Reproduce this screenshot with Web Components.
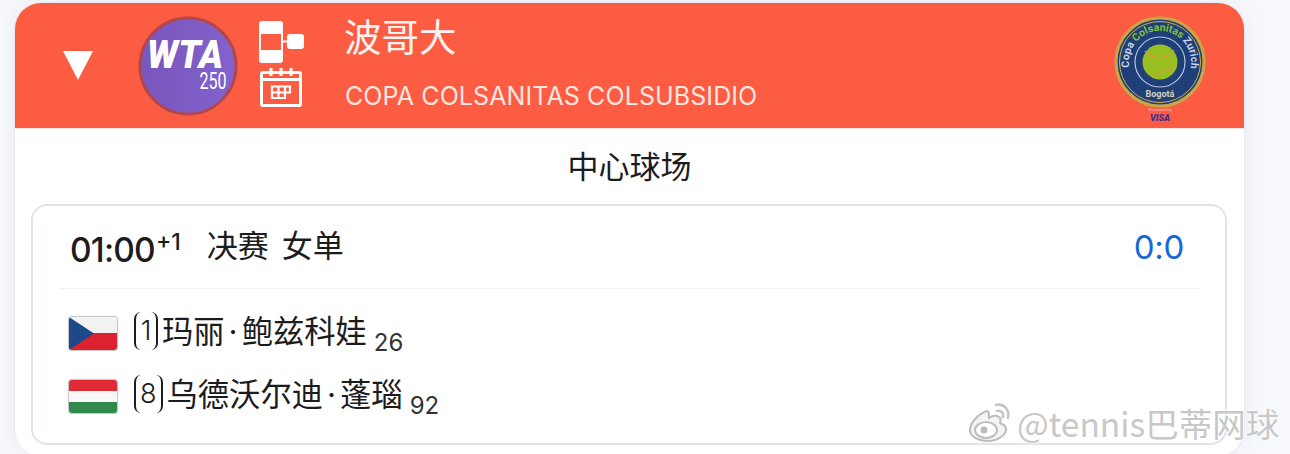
<!DOCTYPE html>
<html>
<head>
<meta charset="utf-8">
<style>
html, body { margin: 0; padding: 0; height: 454px; overflow: hidden; background: #f8f9fc; }
body { font-family: "Inter", "Noto Sans CJK SC", sans-serif; }
</style>
</head>
<body>
<tournament-page>
  <tournament-header slot="header" title-text="波哥大" subtitle="COPA COLSANITAS COLSUBSIDIO"></tournament-header>
  <match-card time="01:00" plus="+1" round="决赛 女单" score="0:0">
    <player-row flag="cz" seed="1" name="玛丽·鲍兹科娃" rank="26"></player-row>
    <player-row flag="hu" seed="8" name="乌德沃尔迪·蓬瑙" rank="92"></player-row>
  </match-card>
</tournament-page>
<weibo-mark></weibo-mark>

<script>
const pageTemplate = document.createElement('template');
pageTemplate.innerHTML = `
<style>
:host { display: block; padding: 3px 46px 0 15px; }
#card {
  background: #fff;
  border-radius: 26px;
  height: 453px;
  box-shadow: 0 0 0 1px #e6e9f2, 0 0 24px rgba(190,196,220,.25);
  overflow: hidden;
}
#court {
  height: 76px;
  box-sizing: border-box;
  padding-bottom: 4px;
  display: flex;
  align-items: center;
  justify-content: center;
  font: 400 31px "Noto Sans CJK SC", sans-serif;
  color: #1c1c1e;
}
#content { padding: 0 17px 0 16px; }
</style>
<div id="card">
  <slot name="header"></slot>
  <div id="court">中心球场</div>
  <div id="content"><slot></slot></div>
</div>
`;

class TournamentPage extends HTMLElement {
  connectedCallback() {
    this.attachShadow({ mode: 'open' });
    this.shadowRoot.appendChild(pageTemplate.content.cloneNode(true));
  }
}

const headerTemplate = document.createElement('template');
headerTemplate.innerHTML = `
<style>
:host { display: block; }
#bar {
  height: 125px;
  background: #fc5c41;
  display: flex;
  align-items: center;
  color: #fff;
  box-shadow: 0 1px 1px #f1e4e2;
  position: relative;
}
#arrow { width: 32px; height: 32px; margin: -2px 0 0 47px; flex: none; }
#wta { width: 102px; height: 102px; margin: 0 0 0 43px; flex: none; }
#icons { display: flex; flex-direction: column; gap: 3px; margin: -2px 0 0 19px; width: 48px; flex: none; }
#icons svg { display: block; }
#titles { margin-left: 39px; flex: 1; display: flex; flex-direction: column; height: 125px; }
#title { font: 400 37.5px/40px "Noto Sans CJK SC", sans-serif; margin: 12px 0 0 -1px; color: #fff2ee; }
#sub { font: 400 25px/30px "Inter", sans-serif; margin-top: 26px; color: #ffe6e0; letter-spacing: .1px; white-space: nowrap; }
#logo { width: 96px; height: 112px; margin: 6px 36px 0 0; flex: none; }
</style>
<div id="bar">
  <svg id="arrow" viewBox="0 0 32 32"><path d="M1 2 H31 L16 31 Z" fill="#fff"/></svg>
  <svg id="wta" viewBox="0 0 102 102">
    <defs><linearGradient id="g" x1="0" x2="1" y1="0" y2="0"><stop offset="0" stop-color="#7a56bd"/><stop offset="1" stop-color="#8262cc"/></linearGradient></defs>
    <circle cx="51" cy="51" r="48" fill="url(#g)" stroke="#b3464b" stroke-width="3"/>
    <text x="48" y="53" text-anchor="middle" font-family="Roboto" font-weight="900" font-style="italic" font-size="39" textLength="76" lengthAdjust="spacingAndGlyphs" fill="#fff">WTA</text>
    <text x="76" y="74" text-anchor="middle" font-family="Roboto" font-size="23" textLength="27" lengthAdjust="spacingAndGlyphs" fill="#fff">250</text>
  </svg>
  <div id="icons">
    <svg width="46" height="43" viewBox="0 0 46 43">
      <rect x="1" y="0" width="24" height="13" rx="3" fill="#fff"/>
      <rect x="1" y="29" width="24" height="13" rx="3" fill="#fff"/>
      <rect x="29" y="13" width="17" height="15" rx="3" fill="#fff"/>
      <path d="M2 12 V30 M24 12 V30 M24 20.5 H30" stroke="#fff" stroke-width="2" fill="none"/>
    </svg>
    <svg width="44" height="41" viewBox="0 0 44 41" style="margin-left:2px">
      <rect x="1.5" y="5.5" width="39" height="33" rx="1.5" stroke="#fff" stroke-width="3" fill="none"/>
      <path d="M1.5 12.5 H40.5" stroke="#fff" stroke-width="3"/>
      <path d="M11 1 V9 M21 1 V9 M31 1 V9" stroke="#fff" stroke-width="3"/>
      <path d="M12 19.5 H30 V25.5 H25 V31 H12 Z M12 25.5 H25 M18.5 19.5 V31 M25 19.5 V25.5" stroke="#fff" stroke-width="2.2" fill="none"/>
    </svg>
  </div>
  <div id="titles"><div id="title"></div><div id="sub"></div></div>
  <svg id="logo" viewBox="0 0 96 112">
    <defs><path id="arc" d="M17.5 54.4 A31 31 0 1 1 78.5 54.4"/></defs>
    <circle cx="48" cy="49" r="44" fill="#1f3f78" stroke="#c9a545" stroke-width="3"/>
    <circle cx="48" cy="49" r="40.5" fill="none" stroke="#d8b248" stroke-width="1"/>
    <circle cx="48" cy="49" r="25" fill="none" stroke="#b9c4dc" stroke-width="1.2"/>
    <circle cx="48" cy="49" r="17.5" fill="#97bf1f"/>
    <path d="M33 38 C41 47 55 47 62 37 M41 65 C46 60 54 56 65 54" stroke="#d99a46" stroke-width="1.2" fill="none"/>
    <text font-family="Roboto" font-weight="700" font-size="10.5" fill="#c9d2e6"><textPath href="#arc" startOffset="0">Copa</textPath></text>
    <text font-family="Roboto" font-weight="700" font-size="10.5" fill="#7fc23a"><textPath href="#arc" startOffset="27">Colsanitas</textPath></text>
    <text font-family="Roboto" font-weight="700" font-size="10.5" fill="#c9d2e6"><textPath href="#arc" startOffset="79">Zurich</textPath></text>
    <text x="48" y="84" text-anchor="middle" font-family="Roboto" font-weight="700" font-size="9" fill="#d8d2b8">Bogotá</text>
    <text x="48" y="98" text-anchor="middle" font-family="Roboto" font-size="4" fill="#f7c7d8">Presented by</text>
    <text x="48" y="108" text-anchor="middle" font-family="Roboto" font-weight="900" font-style="italic" font-size="9" fill="#3b2f9a">VISA</text>
  </svg>
</div>
`;

class TournamentHeader extends HTMLElement {
  connectedCallback() {
    this.attachShadow({ mode: 'open' });
    this.shadowRoot.appendChild(headerTemplate.content.cloneNode(true));
    this.shadowRoot.querySelector('#title').textContent = this.getAttribute('title-text');
    this.shadowRoot.querySelector('#sub').textContent = this.getAttribute('subtitle');
  }
}

const matchTemplate = document.createElement('template');
matchTemplate.innerHTML = `
<style>
:host {
  display: block;
  background: #fff;
  border: 2px solid #e0e3f0;
  border-radius: 16px;
  height: 237px;
  box-sizing: content-box;
  padding: 0 25px;
}
#top {
  height: 82px;
  display: flex;
  align-items: center;
  border-bottom: 1px solid #eff0f3;
  padding: 0 16px 0 12px;
  color: #1c1c1e;
}
#time { font: 500 33.5px "Inter", sans-serif; letter-spacing: -.8px; margin-top: 5px; }
#plus { font: 500 23px "Inter", sans-serif; margin: -10px 0 0 1px; }
#round { font: 400 31px "Noto Sans CJK SC", sans-serif; margin: -8px 0 0 26px; flex: 1; word-spacing: 6px; }
#score { font: 400 33px "Inter", sans-serif; color: #1668d8; letter-spacing: -.3px; }
#players { padding: 13px 0 0 11px; display: flex; flex-direction: column; gap: 0; }
</style>
<div id="top">
  <span id="time"></span><span id="plus"></span>
  <span id="round"></span>
  <span id="score"></span>
</div>
<div id="players"><slot></slot></div>
`;

class MatchCard extends HTMLElement {
  connectedCallback() {
    this.attachShadow({ mode: 'open' });
    this.shadowRoot.appendChild(matchTemplate.content.cloneNode(true));
    for (const [id, attr] of [['time', 'time'], ['plus', 'plus'], ['round', 'round'], ['score', 'score']]) {
      this.shadowRoot.querySelector('#' + id).textContent = this.getAttribute(attr);
    }
  }
}

const flags = {
  cz: `<rect width="48" height="17" fill="#f2f2f2"/><rect y="16" width="48" height="17" fill="#dc2230"/><path d="M0 0 L25 16.5 L0 33 Z" fill="#1c4a87"/>`,
  hu: `<rect width="48" height="11" fill="#df2b35"/><rect y="11" width="48" height="11" fill="#f7f7f7"/><rect y="22" width="48" height="11" fill="#2f8a4b"/>`
};

const playerTemplate = document.createElement('template');
playerTemplate.innerHTML = `
<style>
:host { display: block; }
#row { height: 63px; display: flex; align-items: center; color: #1c1c1e; }
#flag { width: 48px; height: 33px; border-radius: 3px; box-shadow: 0 0 1px 1px rgba(120,120,120,.45); flex: none; }
#seed {
  min-width: 24px; height: 38px;
  box-sizing: border-box;
  padding: 0 4px;
  border-left: 2px solid #1c1c1e;
  border-right: 2px solid #1c1c1e;
  border-radius: 7px;
  margin: -6px 0 0 17px;
  display: flex; align-items: center; justify-content: center;
  font: 300 27px "Inter", sans-serif;
  flex: none;
}
#name { font: 400 31.3px "Noto Sans CJK SC", sans-serif; margin: -9px 0 0 4px; white-space: nowrap; }
.dot { font-family: "Inter", sans-serif; margin: 0 4px; }
#rank { font: 400 24px "Inter", sans-serif; margin: 17px 0 0 7px; color: #333; }
</style>
<div id="row">
  <svg id="flag" viewBox="0 0 48 33"></svg>
  <span id="seed"></span>
  <span id="name"></span>
  <span id="rank"></span>
</div>
`;

class PlayerRow extends HTMLElement {
  connectedCallback() {
    this.attachShadow({ mode: 'open' });
    this.shadowRoot.appendChild(playerTemplate.content.cloneNode(true));
    this.shadowRoot.querySelector('#flag').innerHTML = flags[this.getAttribute('flag')];
    this.shadowRoot.querySelector('#seed').textContent = this.getAttribute('seed');
    // middle dot gets a latin font, the CJK one makes it full width
    const name = this.shadowRoot.querySelector('#name');
    name.innerHTML = this.getAttribute('name').replace('·', '<span class="dot">·</span>');
    this.shadowRoot.querySelector('#rank').textContent = this.getAttribute('rank');
  }
}

const markTemplate = document.createElement('template');
markTemplate.innerHTML = `
<style>
:host { position: absolute; left: 968px; top: 400px; display: flex; align-items: center; gap: 3px; }
svg { margin-top: -4px; }
span {
  font: 400 33.5px "Noto Sans CJK SC", sans-serif;
  color: #c8c8c8;
  text-shadow: 0 0 2px #fff, 0 0 2px #fff, 0 0 3px rgba(255,255,255,.9);
  white-space: nowrap;
  line-height: 46px;
}
</style>
<svg width="46" height="44" viewBox="0 0 46 44">
  <path d="M19 12 C10 15 2 24 2 31 C2 38 11 42 20 42 C30 42 38 36 38 30 C38 26 34 25 32 24 C33 21 33 19 31 18 C28 16 24 17 21 19 C21 15 21 12 19 12 Z" fill="#f4f4f4" stroke="#bdbdbd" stroke-width="2"/>
  <ellipse cx="18" cy="31" rx="11" ry="8" fill="#fff" stroke="#bdbdbd" stroke-width="2"/>
  <circle cx="16" cy="31" r="3.5" fill="#bdbdbd"/>
  <path d="M28 6 C36 4 42 11 40 19 M29 12 C33 11 36 14 35 18" fill="none" stroke="#c4c4c4" stroke-width="2.6" stroke-linecap="round"/>
</svg>
<span>@tennis巴蒂网球</span>
`;

class WeiboMark extends HTMLElement {
  connectedCallback() {
    this.attachShadow({ mode: 'open' });
    this.shadowRoot.appendChild(markTemplate.content.cloneNode(true));
  }
}

customElements.define('tournament-page', TournamentPage);
customElements.define('tournament-header', TournamentHeader);
customElements.define('match-card', MatchCard);
customElements.define('player-row', PlayerRow);
customElements.define('weibo-mark', WeiboMark);
</script>
</body>
</html>
